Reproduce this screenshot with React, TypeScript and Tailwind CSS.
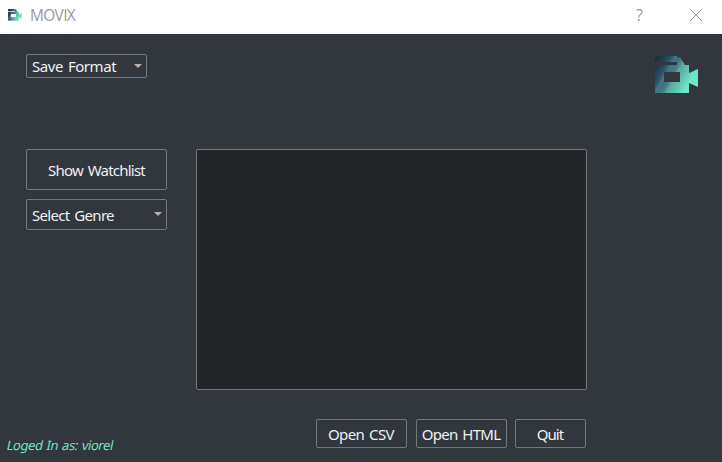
import React from "react";

const uiFont = "font-['Noto_Sans','Open_Sans',sans-serif]";

function Logo({ className, id }: { className: string; id: string }) {
  return (
    <svg className={className} viewBox="0 0 44 38" preserveAspectRatio="none">
      <defs>
        <linearGradient id={id} gradientUnits="userSpaceOnUse" x1="0" y1="3" x2="36" y2="23">
          <stop offset="0" stopColor="#202b35" />
          <stop offset="0.18" stopColor="#213f4e" />
          <stop offset="0.32" stopColor="#2c5568" />
          <stop offset="0.4" stopColor="#437681" />
          <stop offset="0.5" stopColor="#407484" />
          <stop offset="0.58" stopColor="#468689" />
          <stop offset="0.63" stopColor="#5aa69f" />
          <stop offset="0.82" stopColor="#62c5b1" />
          <stop offset="1" stopColor="#6ee6c9" />
        </linearGradient>
      </defs>
      <path
        fill={`url(#${id})`}
        fillRule="evenodd"
        d="M2 0H22L23 2L25 1L30 9H34V17L43 13V31L34 27V37H0V9H22V6H0V2ZM9 16V26H25V16Z"
      />
    </svg>
  );
}

function Combo({ label, className, text, arrow }: { label: string; className: string; text: string; arrow: string }) {
  return (
    <button className={`flex shrink-0 justify-between rounded-[2px] border border-[#76797c] pl-[5px] ${className}`}>
      <span className={`whitespace-nowrap text-[15px] leading-[20px] [word-spacing:1.5px] ${text}`}>{label}</span>
      <svg className={`mr-[4px] h-[4px] w-[8px] ${arrow}`} viewBox="0 0 8 4">
        <path d="M0 0H8L4 4Z" fill="#bcaea2" />
      </svg>
    </button>
  );
}

function Action({ label, className, text }: { label: string; className: string; text: string }) {
  return (
    <button className={`flex shrink-0 items-center justify-center rounded-[2px] border border-[#76797c] ${className}`}>
      <span className={`whitespace-nowrap text-[15px] leading-[20px] [word-spacing:1.5px] ${text}`}>{label}</span>
    </button>
  );
}

export default function App() {
  return (
    <div className={`flex h-[462px] w-[722px] flex-col overflow-hidden bg-[#31363b] text-[#eff0f1] ${uiFont}`}>
      <header className="flex h-[34px] shrink-0 items-start bg-white pl-2 font-['Open_Sans','Noto_Sans',sans-serif] text-[#999]">
        <Logo id="small-logo" className="mt-[9px] h-[12px] w-[14px]" />
        <span className="ml-[8px] mt-[5px] text-[15.5px] leading-[20px] tracking-[-0.7px]">MOVIX</span>
        <span className="ml-auto mt-[5px] text-[16px] leading-[20px]">?</span>
        <svg className="ml-[47px] mr-[20px] mt-[9px] h-[12px] w-[12px]" viewBox="0 0 12 12">
          <path d="M0 0L12 12M12 0L0 12" stroke="#999" strokeWidth="1" />
        </svg>
      </header>
      <main className="flex flex-1 flex-col bg-[#32363d] pt-[20px]">
        <div className="flex h-[95px] items-start justify-between pl-[26px] pr-[23px]">
          <Combo label="Save Format" className="h-[24px] w-[121px]" text="mt-[1px] tracking-[-0.45px]" arrow="mt-[9px]" />
          <Logo id="large-logo" className="mt-[2px] h-[38px] w-[44px]" />
        </div>
        <div className="flex gap-[29px] pl-[26px]">
          <div className="flex w-[141px] flex-col gap-[9px]">
            <Action label="Show Watchlist" className="h-[41px]" text="mt-[1px] tracking-[-0.78px]" />
            <Combo label="Select Genre" className="h-[31px]" text="mt-[5px] tracking-[-0.68px]" arrow="mt-[12px]" />
          </div>
          <div className="h-[241px] w-[391px] rounded-[2px] border border-[#76797c] bg-[#232629]" />
        </div>
        <footer className="flex pt-[29px]">
          <div className="ml-[7px] mt-[13px] w-[309px]">
            <span className="inline-block -skew-x-12 whitespace-nowrap text-[13px] leading-[18px] tracking-[-0.42px] [word-spacing:1px] text-[#6ee6c9]">
              Loged In as: viorel
            </span>
          </div>
          <div className="flex items-start">
            <Action label="Open CSV" className="h-[29px] w-[91px]" text="mt-[1px] mr-[1px] tracking-[-0.6px]" />
            <Action label="Open HTML" className="ml-[9px] h-[29px] w-[91px]" text="mt-[1px] mr-[1px] tracking-[-0.7px]" />
            <Action label="Quit" className="ml-[8px] h-[29px] w-[71px]" text="mt-[1px] mr-[1px] tracking-[-0.9px]" />
          </div>
        </footer>
      </main>
    </div>
  );
}
